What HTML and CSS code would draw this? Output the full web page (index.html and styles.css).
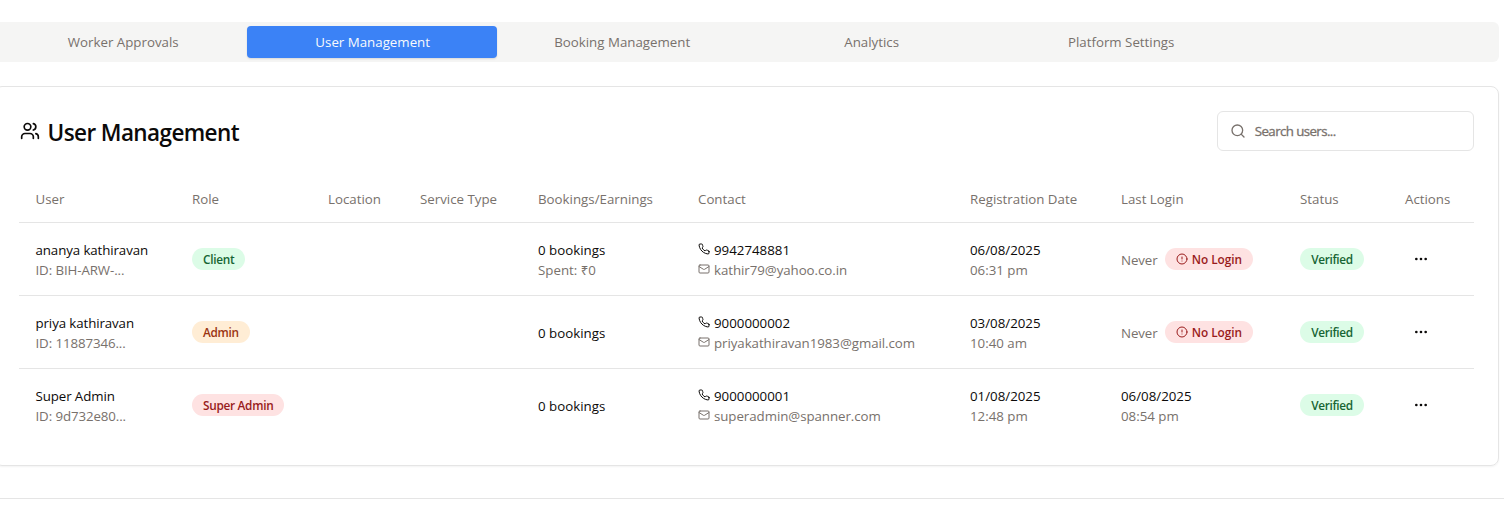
FILE: index.html
```html
<!DOCTYPE html>
<html lang="en">
<head>
<meta charset="utf-8">
<title>User Management</title>
<link rel="stylesheet" href="styles.css">
</head>
<body>
<svg class="sprite" aria-hidden="true">
  <symbol id="phone" viewBox="0 0 24 24"><path d="M22 16.92v3a2 2 0 0 1-2.18 2 19.79 19.79 0 0 1-8.63-3.07 19.5 19.5 0 0 1-6-6 19.79 19.79 0 0 1-3.07-8.67A2 2 0 0 1 4.11 2h3a2 2 0 0 1 2 1.72 12.84 12.84 0 0 0 .7 2.81 2 2 0 0 1-.45 2.11L8.09 9.91a16 16 0 0 0 6 6l1.27-1.27a2 2 0 0 1 2.11-.45 12.84 12.84 0 0 0 2.81.7A2 2 0 0 1 22 16.92z"/></symbol>
  <symbol id="mail" viewBox="0 0 24 24"><rect width="20" height="16" x="2" y="4" rx="2"/><path d="m22 7-8.97 5.7a1.94 1.94 0 0 1-2.06 0L2 7"/></symbol>
  <symbol id="alert" viewBox="0 0 24 24"><circle cx="12" cy="12" r="10"/><path d="M12 8v4M12 16h.01"/></symbol>
  <symbol id="more" viewBox="0 0 24 24"><circle cx="12" cy="12" r="1"/><circle cx="19" cy="12" r="1"/><circle cx="5" cy="12" r="1"/></symbol>
</svg>
<main class="page">
  <nav class="tabs">
    <button class="tab">Worker Approvals</button>
    <button class="tab active">User Management</button>
    <button class="tab">Booking Management</button>
    <button class="tab">Analytics</button>
    <button class="tab">Platform Settings</button>
  </nav>
  <section class="card">
    <header class="card-head">
      <h1 class="title">
        <svg class="icon users" viewBox="0 0 24 24"><path d="M16 21v-2a4 4 0 0 0-4-4H6a4 4 0 0 0-4 4v2"/><circle cx="9" cy="7" r="4"/><path d="M22 21v-2a4 4 0 0 0-3-3.87M16 3.13a4 4 0 0 1 0 7.75"/></svg>
        <span>User Management</span>
      </h1>
      <label class="search">
        <svg class="icon" viewBox="0 0 24 24"><circle cx="11" cy="11" r="8"/><path d="m21 21-4.3-4.3"/></svg>
        <span>Search users...</span>
      </label>
    </header>
    <table class="users-table">
      <colgroup><col class="c-user"><col class="c-role"><col class="c-loc"><col class="c-service"><col class="c-book"><col class="c-contact"><col class="c-reg"><col class="c-login"><col class="c-status"><col class="c-actions"></colgroup>
      <thead>
        <tr><th>User</th><th>Role</th><th>Location</th><th>Service Type</th><th>Bookings/Earnings</th><th>Contact</th><th>Registration Date</th><th>Last Login</th><th>Status</th><th>Actions</th></tr>
      </thead>
      <tbody>
        <tr>
          <td class="two"><div class="name">ananya kathiravan</div><div class="muted id">ID: BIH-ARW-...</div></td>
          <td><span class="badge green">Client</span></td>
          <td></td><td></td>
          <td class="two"><div>0 bookings</div><div class="muted">Spent: ₹0</div></td>
          <td class="two"><div class="line"><svg class="icon"><use href="#phone"/></svg>9942748881</div><div class="line muted email"><svg class="icon"><use href="#mail"/></svg>kathir79@yahoo.co.in</div></td>
          <td class="two"><div>06/08/2025</div><div class="muted">06:31 pm</div></td>
          <td><div class="never"><span class="muted">Never</span><span class="badge red login"><svg class="icon"><use href="#alert"/></svg>No Login</span></div></td>
          <td><span class="badge green verified">Verified</span></td>
          <td><button class="more"><svg class="icon"><use href="#more"/></svg></button></td>
        </tr>
        <tr>
          <td class="two"><div class="name">priya kathiravan</div><div class="muted id">ID: 11887346...</div></td>
          <td><span class="badge orange">Admin</span></td>
          <td></td><td></td>
          <td><div class="single">0 bookings</div></td>
          <td class="two"><div class="line"><svg class="icon"><use href="#phone"/></svg>9000000002</div><div class="line muted email"><svg class="icon"><use href="#mail"/></svg>priyakathiravan1983@gmail.com</div></td>
          <td class="two"><div>03/08/2025</div><div class="muted">10:40 am</div></td>
          <td><div class="never"><span class="muted">Never</span><span class="badge red login"><svg class="icon"><use href="#alert"/></svg>No Login</span></div></td>
          <td><span class="badge green verified">Verified</span></td>
          <td><button class="more"><svg class="icon"><use href="#more"/></svg></button></td>
        </tr>
        <tr>
          <td class="two"><div class="name">Super Admin</div><div class="muted id">ID: 9d732e80...</div></td>
          <td><span class="badge red">Super Admin</span></td>
          <td></td><td></td>
          <td><div class="single">0 bookings</div></td>
          <td class="two"><div class="line"><svg class="icon"><use href="#phone"/></svg>9000000001</div><div class="line muted email"><svg class="icon"><use href="#mail"/></svg>superadmin@spanner.com</div></td>
          <td class="two"><div>01/08/2025</div><div class="muted">12:48 pm</div></td>
          <td class="two"><div>06/08/2025</div><div class="muted">08:54 pm</div></td>
          <td><span class="badge green verified">Verified</span></td>
          <td><button class="more"><svg class="icon"><use href="#more"/></svg></button></td>
        </tr>
      </tbody>
    </table>
  </section>
</main>
<footer class="footer"></footer>
</body>
</html>
```
FILE: styles.css
```css
* { box-sizing: border-box; }
body {
  margin: 0;
  height: 511px;
  overflow: hidden;
  background: #fff;
  color: #0c0a09;
  font: 400 13.3px/20px "Open Sans", "Noto Sans", sans-serif;
}
.sprite { display: none; }
.icon {
  flex: none;
  fill: none;
  stroke: currentColor;
  stroke-width: 2;
  stroke-linecap: round;
  stroke-linejoin: round;
}
button { border: 0; background: none; padding: 0; font: inherit; color: inherit; }

.page { width: 1505px; margin-left: -6px; padding-top: 22px; }
.tabs {
  display: grid;
  grid-template-columns: repeat(6, 249.5px);
  height: 40px;
  padding: 4px 3.7px;
  border-radius: 6px;
  background: #f5f5f4;
  color: #78716c;
}
.tab { padding-left: 1.5px; border-radius: 4px; }
.tab.active {
  background: #3b82f6;
  color: #f8fafc;
  box-shadow: 0 1px 2px rgba(0, 0, 0, .12);
}

.card {
  height: 380px;
  margin-top: 24px;
  padding: 24px;
  border: 1px solid #e5e5e5;
  border-radius: 8px;
  box-shadow: 0 1px 2px rgba(0, 0, 0, .05);
}
.card-head { display: flex; justify-content: space-between; height: 63px; }
.title {
  display: flex;
  gap: 8px;
  margin: 0;
  height: 40px;
  font-size: 22.5px;
  line-height: 43px;
  font-weight: 600;
  letter-spacing: -.6px;
}
.title .users { width: 20px; height: 20px; margin-top: 10px; margin-left: .6px; }
.search {
  display: flex;
  align-items: center;
  gap: 9px;
  width: 256.5px;
  height: 40px;
  margin-right: .3px;
  padding-left: 11.6px;
  border: 1px solid #e5e5e5;
  border-radius: 6px;
  color: #78716c;
  letter-spacing: -.6px;
  -webkit-text-stroke: .3px #78716c;
}
.search .icon { width: 16px; height: 16px; }

.users-table { width: 1455px; table-layout: fixed; border-collapse: separate; border-spacing: 0; }
.c-user { width: 157px; }
.c-role { width: 136px; }
.c-loc { width: 92px; }
.c-service { width: 118px; }
.c-book { width: 160px; }
.c-contact { width: 272px; }
.c-reg { width: 151px; }
.c-login { width: 179px; }
.c-status { width: 105px; }
.c-actions { width: 85px; }
th {
  height: 49px;
  padding: 2px 16px 0;
  border-bottom: 1px solid #e5e5e5;
  color: #78716c;
  font-weight: 400;
  text-align: left;
  white-space: nowrap;
}
td { height: 73px; padding: 0 16px; border-bottom: 1px solid #e5e5e5; white-space: nowrap; }
td.two { padding-top: 2px; }
td:first-child, th:first-child { padding-left: 16.5px; }
tr:last-child td { height: 72px; border-bottom: 0; }
.name, .id { letter-spacing: -.1px; }
.muted { color: #78716c; }
.single { padding-top: 2px; }
.line { display: flex; gap: 4px; }
.line .icon { width: 12px; height: 12px; margin-top: 3px; }
.email { letter-spacing: -.06px; }
.never { display: flex; align-items: center; gap: 7.5px; letter-spacing: -.1px; }
.never .muted { padding-top: 2px; }

.badge {
  display: inline-flex;
  align-items: center;
  height: 22px;
  padding: 0 11px;
  border-radius: 11px;
  font-size: 11.8px;
  font-weight: 600;
  letter-spacing: -.28px;
  vertical-align: middle;
}
.badge.login { letter-spacing: -.03px; padding: 0 10.7px; }
.badge.verified { padding: 0 11.3px; letter-spacing: -.35px; }
.badge .icon { width: 12px; height: 12px; margin-right: 4px; }
.green { background: #dcfce7; color: #166534; }
.orange { background: #ffedd5; color: #9a3412; }
.red { background: #fee2e2; color: #991b1b; }
.more { display: block; width: 31px; height: 16px; padding-left: 7.5px; }
.more .icon { display: block; width: 16px; height: 16px; }

.footer { margin-top: 32px; border-top: 1px solid #e5e5e5; }
```
